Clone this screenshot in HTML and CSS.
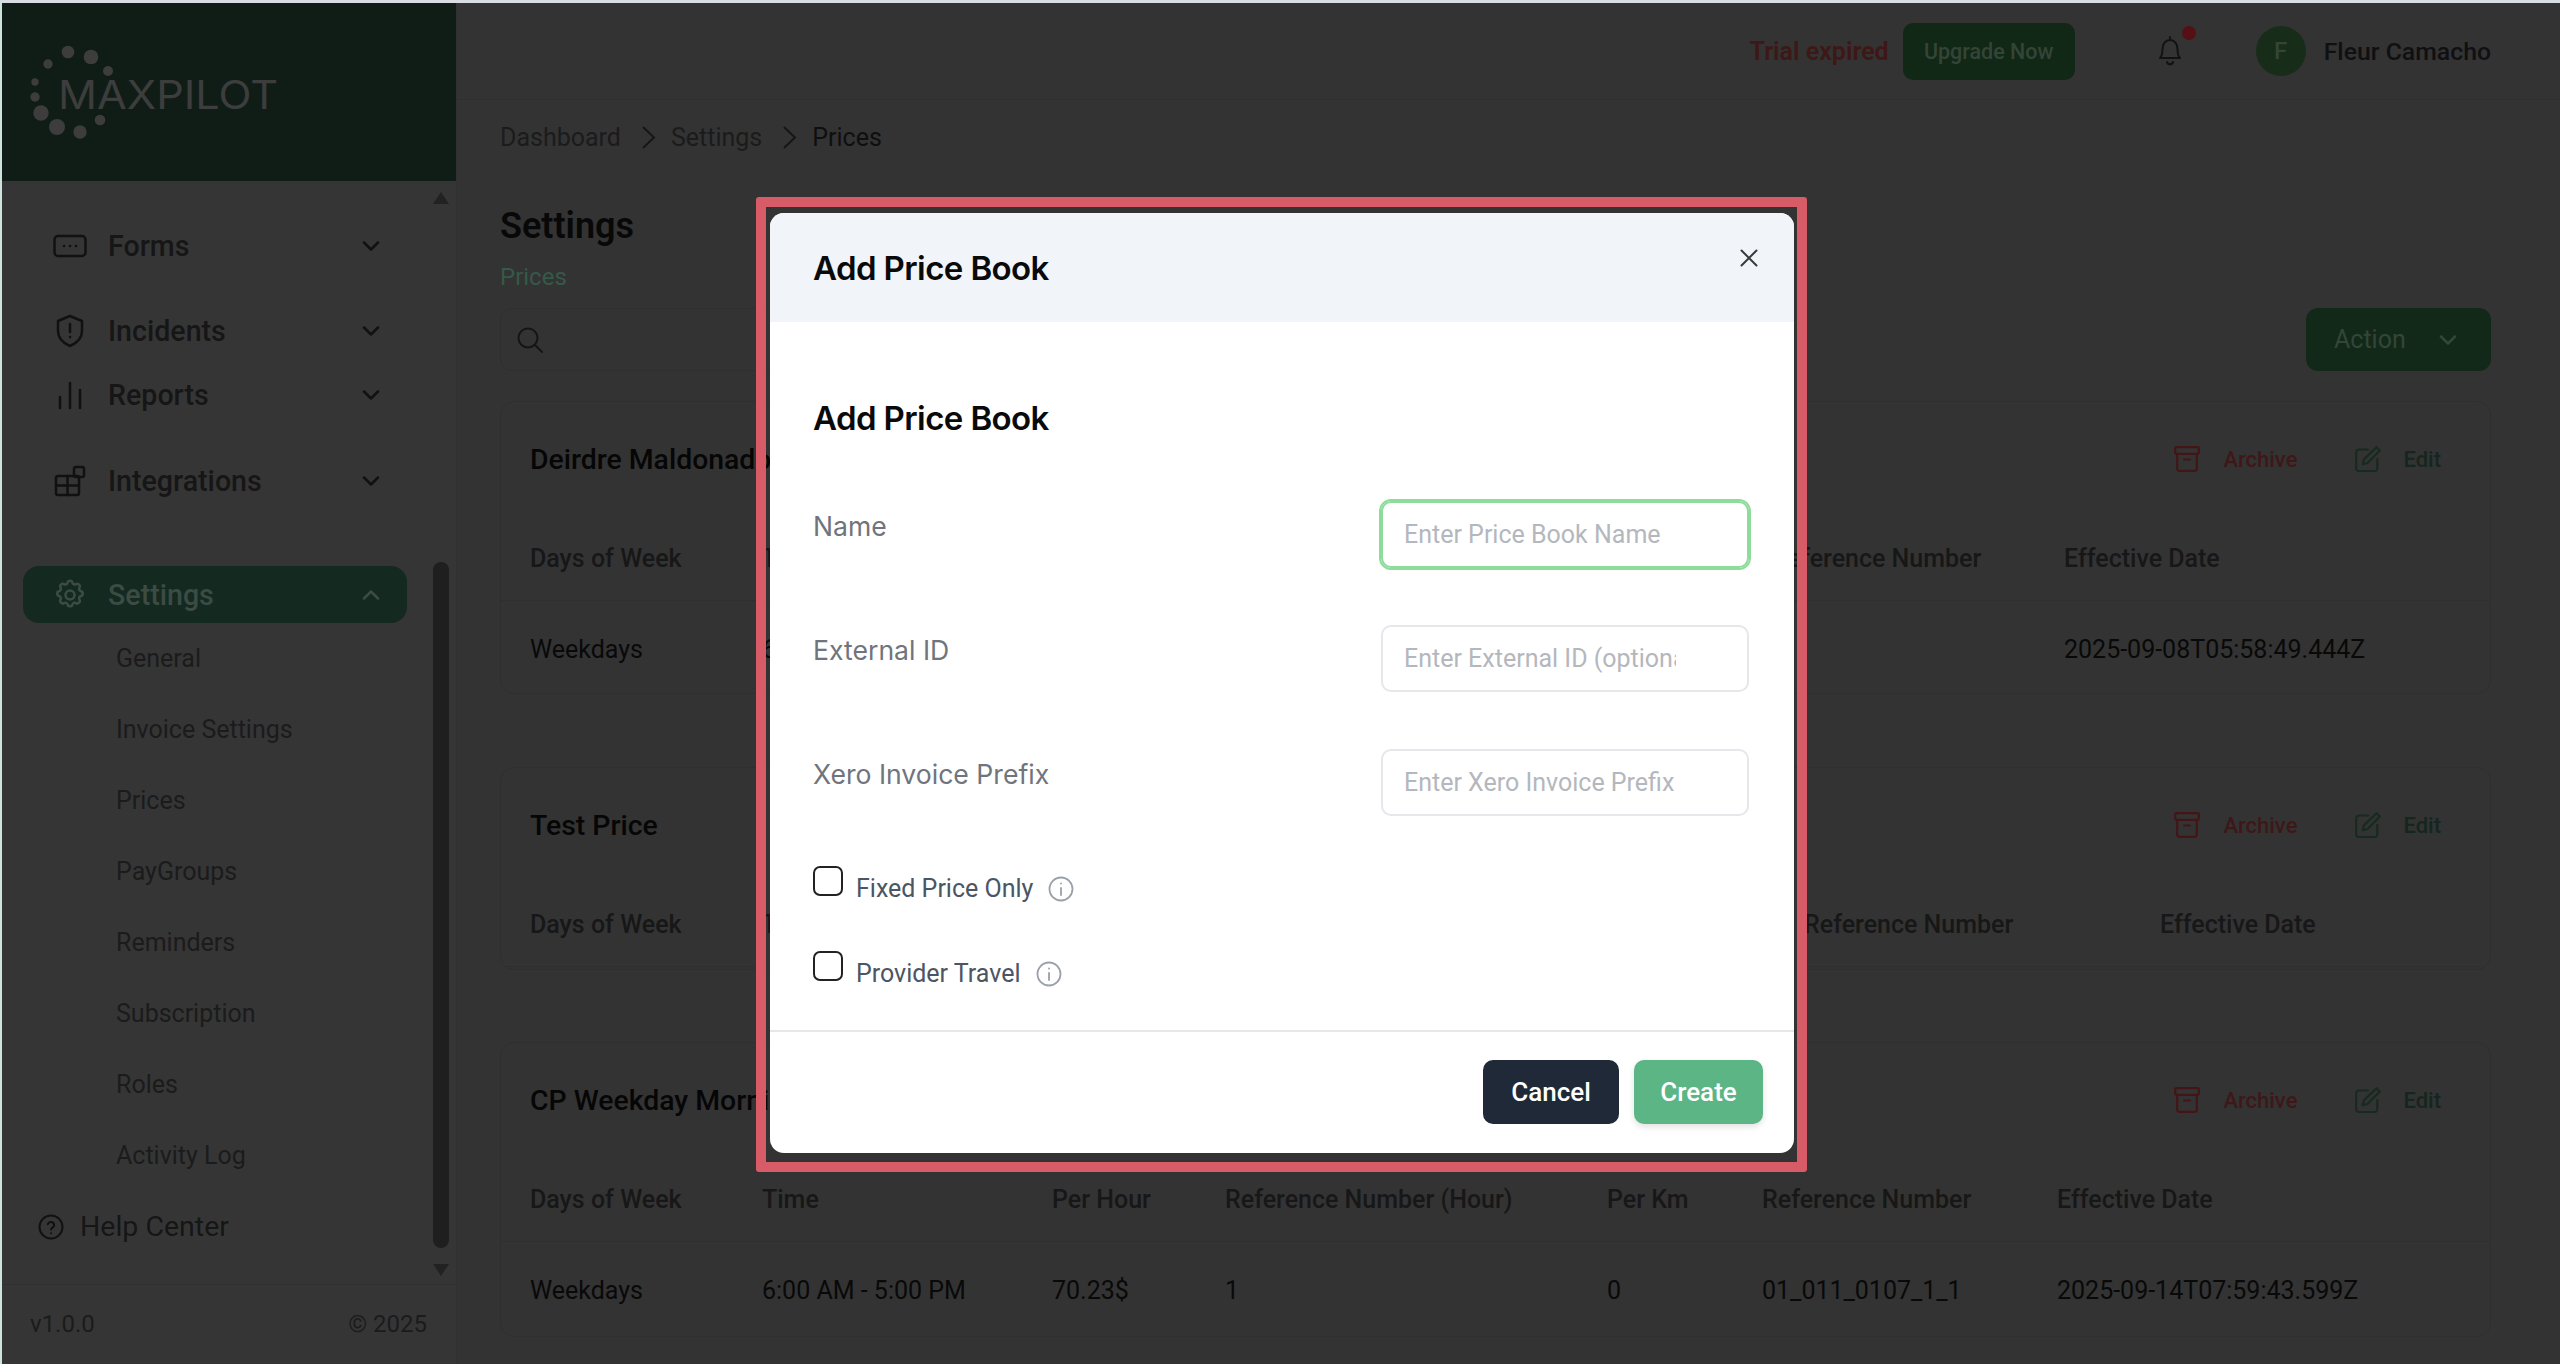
FILE: index.html
```html
<!DOCTYPE html>
<html lang="en">
<head>
    <meta charset="UTF-8">
    <title>Prices - Settings</title>
    <link rel="stylesheet" href="styles.css">
</head>
<body>
    <div class="app">
        <aside class="sidebar">
            <div class="logo-bar">
                <svg class="logo" width="300" height="178" viewBox="0 0 300 178">
                    <g fill="#3d3d3d">
                        <circle cx="66" cy="49" r="6.3"/><circle cx="89" cy="54" r="7.3"/><circle cx="106" cy="68" r="5"/>
                        <circle cx="46" cy="61" r="4.7"/><circle cx="33" cy="79" r="3.7"/><circle cx="33" cy="94" r="4.7"/>
                        <circle cx="39" cy="110" r="7.7"/><circle cx="55" cy="124" r="8"/><circle cx="78" cy="129" r="6.7"/>
                        <circle cx="98" cy="117" r="5.3"/>
                        <text class="logo-text" x="56" y="106" textLength="220" lengthAdjust="spacingAndGlyphs">MAXPILOT</text>
                    </g>
                </svg>
            </div>

            <nav class="menu">
                <a class="menu-item item-forms">
                    <svg class="menu-icon" viewBox="0 0 34 24"><rect x="1.500" y="2" width="31" height="20" rx="3.500"/><path d="M11 12h.1M17 12h.1M23 12h.1"/></svg>
                    <span>Forms</span>
                    <svg class="chev" viewBox="0 0 18 10"><path d="M2 1.500l7 7 7-7"/></svg>
                </a>
                <a class="menu-item item-incidents">
                    <svg class="menu-icon" viewBox="0 0 32 34"><path d="M16 2l12 5v10c0 8-5 12-12 15C9 29 4 25 4 17V7z"/><path d="M16 10v8M16 23h.1"/></svg>
                    <span>Incidents</span>
                    <svg class="chev" viewBox="0 0 18 10"><path d="M2 1.500l7 7 7-7"/></svg>
                </a>
                <a class="menu-item item-reports">
                    <svg class="menu-icon" viewBox="0 0 34 34"><path d="M7 30V19M17 30V5M27 30V12"/></svg>
                    <span>Reports</span>
                    <svg class="chev" viewBox="0 0 18 10"><path d="M2 1.500l7 7 7-7"/></svg>
                </a>
                <a class="menu-item item-integrations">
                    <svg class="menu-icon" viewBox="0 0 34 34"><rect x="3" y="12" width="23" height="19" rx="2"/><path d="M3 21.500h23M14.500 12v19"/><rect x="21" y="3" width="10" height="10" rx="2"/></svg>
                    <span>Integrations</span>
                    <svg class="chev" viewBox="0 0 18 10"><path d="M2 1.500l7 7 7-7"/></svg>
                </a>
                <a class="menu-item active">
                    <svg class="menu-icon" viewBox="0 0 24 24"><circle cx="12" cy="12" r="3.200"/><path d="M10.300 3.200c.4-1.600 3-1.600 3.400 0a1.700 1.700 0 0 0 2.600 1.100c1.400-.9 3.300 1 2.400 2.400a1.700 1.700 0 0 0 1.100 2.600c1.600.4 1.600 3 0 3.400a1.700 1.700 0 0 0-1.100 2.600c.9 1.400-1 3.300-2.400 2.400a1.700 1.700 0 0 0-2.600 1.100c-.4 1.600-3 1.600-3.400 0a1.700 1.700 0 0 0-2.600-1.100c-1.400.9-3.300-1-2.400-2.400a1.700 1.700 0 0 0-1.100-2.600c-1.600-.4-1.600-3 0-3.400a1.700 1.700 0 0 0 1.100-2.600c-.9-1.400 1-3.300 2.400-2.400a1.700 1.700 0 0 0 2.600-1.100z"/></svg>
                    <span>Settings</span>
                    <svg class="chev" viewBox="0 0 18 10"><path d="M2 8.500l7-7 7 7"/></svg>
                </a>
                <div class="submenu">
                    <a>General</a>
                    <a>Invoice Settings</a>
                    <a>Prices</a>
                    <a>PayGroups</a>
                    <a>Reminders</a>
                    <a>Subscription</a>
                    <a>Roles</a>
                    <a>Activity Log</a>
                </div>
                <a class="help">
                    <svg class="help-icon" viewBox="0 0 26 26"><circle cx="13" cy="13" r="11.500"/><path d="M9.800 10.200a3.300 3.300 0 0 1 6.400 1c0 2.200-3.200 2.600-3.200 4.400M13 19.200h.1"/></svg>
                    <span>Help Center</span>
                </a>
                <div class="scrollbar">
                    <div class="arrow-up"></div>
                    <div class="thumb"></div>
                    <div class="arrow-down"></div>
                </div>
            </nav>

            <div class="sidebar-foot">
                <span>v1.0.0</span>
                <span>© 2025</span>
            </div>
        </aside>

        <main class="main">
            <header class="topbar">
                <span class="trial">Trial expired</span>
                <button class="upgrade">Upgrade Now</button>
                <div class="bell">
                    <svg width="30" height="34" viewBox="0 0 30 34"><path d="M5 24c2-2 2.500-4 2.500-9 0-5 3-9 7.500-9s7.500 4 7.500 9c0 5 .5 7 2.500 9zM15 3v3M12 28c.5 3 5.500 3 6 0"/></svg>
                    <i class="bell-dot"></i>
                </div>
                <div class="avatar">F</div>
                <span class="user-name">Fleur Camacho</span>
            </header>

            <div class="content">
                <div class="crumbs">
                    <span>Dashboard</span>
                    <svg class="crumb-sep" viewBox="0 0 15 25"><path d="M2 2l11 10.500L2 23"/></svg>
                    <span>Settings</span>
                    <svg class="crumb-sep" viewBox="0 0 15 25"><path d="M2 2l11 10.500L2 23"/></svg>
                    <span class="crumb-now">Prices</span>
                </div>

                <h1>Settings</h1>
                <div class="subtitle">Prices</div>

                <div class="toolbar">
                    <div class="search">
                        <svg width="28" height="28" viewBox="0 0 28 28"><circle cx="12" cy="12" r="9.500"/><path d="M19 19l7 7"/></svg>
                    </div>
                    <button class="action">Action
                        <svg class="action-chev" viewBox="0 0 18 10"><path d="M2 1.500l7 7 7-7"/></svg>
                    </button>
                </div>

                <section class="card card-one">
                    <div class="card-head">
                        <h3>Deirdre Maldonado Weekday</h3>
                        <div class="card-actions">
                            <svg class="act-icon red" viewBox="0 0 26 26"><rect x="1.200" y="1.200" width="23.600" height="6.600" rx="1"/><path d="M3.200 7.800v15a2 2 0 0 0 2 2h15.600a2 2 0 0 0 2-2v-15M10 13.500h6"/></svg>
                            <span class="archive">Archive</span>
                            <svg class="act-icon green" viewBox="0 0 26 26"><path d="M13 3.500H4a2.800 2.800 0 0 0-2.800 2.800v16a2.800 2.800 0 0 0 2.800 2.800h15.500a2.800 2.800 0 0 0 2.800-2.800V13"/><path d="M21.500 1.200l3.300 3.300L12.500 17l-4.800 1.200 1.200-4.800z"/></svg>
                            <span class="edit">Edit</span>
                        </div>
                    </div>
                    <div class="row row-head cols-one">
                        <span>Days of Week</span><span>Time</span><span>Per Hour</span><span>Reference Number (Hour)</span><span>Per Km</span><span>Reference Number</span><span>Effective Date</span>
                    </div>
                    <div class="row row-body cols-one">
                        <span>Weekdays</span><span>6:00</span><span></span><span></span><span></span><span></span><span>2025-09-08T05:58:49.444Z</span>
                    </div>
                </section>

                <section class="card card-two">
                    <div class="card-head">
                        <h3>Test Price</h3>
                        <div class="card-actions">
                            <svg class="act-icon red" viewBox="0 0 26 26"><rect x="1.200" y="1.200" width="23.600" height="6.600" rx="1"/><path d="M3.200 7.800v15a2 2 0 0 0 2 2h15.600a2 2 0 0 0 2-2v-15M10 13.500h6"/></svg>
                            <span class="archive">Archive</span>
                            <svg class="act-icon green" viewBox="0 0 26 26"><path d="M13 3.500H4a2.800 2.800 0 0 0-2.800 2.800v16a2.800 2.800 0 0 0 2.800 2.800h15.500a2.800 2.800 0 0 0 2.800-2.800V13"/><path d="M21.500 1.200l3.300 3.300L12.500 17l-4.800 1.200 1.200-4.800z"/></svg>
                            <span class="edit">Edit</span>
                        </div>
                    </div>
                    <div class="row row-head cols-two">
                        <span>Days of Week</span><span>Time</span><span>Per Hour</span><span>Reference Number (Hour)</span><span>Per Km</span><span>Reference Number</span><span>Effective Date</span>
                    </div>
                </section>

                <section class="card card-three">
                    <div class="card-head">
                        <h3>CP Weekday Morning</h3>
                        <div class="card-actions">
                            <svg class="act-icon red" viewBox="0 0 26 26"><rect x="1.200" y="1.200" width="23.600" height="6.600" rx="1"/><path d="M3.200 7.800v15a2 2 0 0 0 2 2h15.600a2 2 0 0 0 2-2v-15M10 13.500h6"/></svg>
                            <span class="archive">Archive</span>
                            <svg class="act-icon green" viewBox="0 0 26 26"><path d="M13 3.500H4a2.800 2.800 0 0 0-2.800 2.800v16a2.800 2.800 0 0 0 2.800 2.800h15.500a2.800 2.800 0 0 0 2.800-2.800V13"/><path d="M21.500 1.200l3.300 3.300L12.500 17l-4.800 1.200 1.200-4.800z"/></svg>
                            <span class="edit">Edit</span>
                        </div>
                    </div>
                    <div class="row row-head cols-three">
                        <span>Days of Week</span><span>Time</span><span>Per Hour</span><span>Reference Number (Hour)</span><span>Per Km</span><span>Reference Number</span><span>Effective Date</span>
                    </div>
                    <div class="row row-body cols-three">
                        <span>Weekdays</span><span>6:00 AM - 5:00 PM</span><span>70.23$</span><span>1</span><span>0</span><span>01_011_0107_1_1</span><span>2025-09-14T07:59:43.599Z</span>
                    </div>
                </section>
            </div>
        </main>
    </div>

    <!-- red frame marks the dialog -->
    <div class="frame">
        <div class="modal">
            <div class="modal-head">
                <h2>Add Price Book</h2>
                <svg class="modal-close" viewBox="0 0 18 18"><path d="M1.500 1.500l15 15M16.500 1.500l-15 15"/></svg>
            </div>
            <div class="modal-body">
                <h2>Add Price Book</h2>
                <div class="field first">
                    <label for="pbName">Name</label>
                    <input id="pbName" class="focused" type="text" placeholder="Enter Price Book Name">
                </div>
                <div class="field">
                    <label for="pbExternal">External ID</label>
                    <input id="pbExternal" type="text" placeholder="Enter External ID (optional)">
                </div>
                <div class="field">
                    <label for="pbPrefix">Xero Invoice Prefix</label>
                    <input id="pbPrefix" type="text" placeholder="Enter Xero Invoice Prefix">
                </div>
                <div class="check check-fixed">
                    <span class="box"></span>
                    <span class="check-label">Fixed Price Only</span>
                    <svg class="info" viewBox="0 0 26 26"><circle cx="13" cy="13" r="11.500"/><path d="M13 12v7M13 7.500h.1"/></svg>
                </div>
                <div class="check check-travel">
                    <span class="box"></span>
                    <span class="check-label">Provider Travel</span>
                    <svg class="info" viewBox="0 0 26 26"><circle cx="13" cy="13" r="11.500"/><path d="M13 12v7M13 7.500h.1"/></svg>
                </div>
            </div>
            <div class="modal-foot">
                <button class="btn-cancel">Cancel</button>
                <button class="btn-create">Create</button>
            </div>
        </div>
    </div>
</body>
</html>
```

FILE: styles.css
```css
* { box-sizing: border-box; }
html, body { margin: 0; height: 100%; overflow: hidden; }
body { font-family: Roboto, "Liberation Sans", sans-serif; background: #333; color: #111; font-size: 25px; }
h1, h2, h3 { margin: 0; }
button { font-family: inherit; border: 0; }

.app { display: flex; height: 1364px; border-top: 3px solid #d9dde3; border-left: 2px solid #cfe3de; }

/* sidebar */
.sidebar { width: 455px; flex: none; display: flex; flex-direction: column; background: #353535; border-right: 1px solid #303030; }
.logo-bar { height: 178px; flex: none; background: #101d17; }
.logo { display: block; }
.logo-text { font-family: Inter, sans-serif; font-size: 39px; font-weight: 400; }
.menu { position: relative; flex: 1; padding-top: 36px; }
.menu-item { display: flex; align-items: center; height: 57px; margin: 0 49px 0 21px; padding-left: 30px; font-size: 28.600px; font-weight: 500; color: #161617; }
.menu-item span { flex: 1; margin-left: 21px; }
.menu-icon { width: 34px; height: 34px; flex: none; fill: none; stroke: #111; stroke-width: 2.500; stroke-linecap: round; stroke-linejoin: round; }
.chev { width: 18px; height: 10px; margin-right: 27px; fill: none; stroke: #111; stroke-width: 2.500; stroke-linecap: round; stroke-linejoin: round; }
.item-incidents { margin-top: 28px; }
.item-reports { margin-top: 7px; }
.item-integrations { margin-top: 29px; }
.menu-item.active { margin-top: 57px; border-radius: 16px; background: #14291f; color: #3c4b44; }
.menu-item.active .menu-icon, .menu-item.active .chev { stroke: #3c4b44; stroke-width: 1.800; }
.menu-item.active .chev { stroke-width: 2.500; }
.submenu { display: flex; flex-direction: column; padding-left: 114px; }
.submenu a { height: 71px; display: flex; align-items: center; font-size: 25px; color: #1b1b1c; }
.help { display: flex; align-items: center; height: 71px; padding-left: 36px; font-size: 28.500px; color: #161617; }
.help span { margin-left: 16px; }
.help-icon { width: 26px; height: 26px; fill: none; stroke: #111; stroke-width: 2; stroke-linecap: round; }
.scrollbar { position: absolute; right: 7px; top: 11px; width: 16px; bottom: 8px; display: flex; flex-direction: column; align-items: center; justify-content: space-between; }
.arrow-up { border: 8px solid transparent; border-top: 0; border-bottom: 12px solid #222; }
.arrow-down { border: 8px solid transparent; border-bottom: 0; border-top: 12px solid #222; }
.thumb { width: 16px; height: 686px; margin-top: 342px; border-radius: 8px; background: #1f1f1f; }
.sidebar-foot { height: 78px; flex: none; display: flex; align-items: center; justify-content: space-between; padding: 0 29px 0 28px; margin-bottom: 2px; border-top: 1px solid #2f2f2f; font-size: 24px; color: #1b1b1c; }

/* main */
.main { flex: 1; min-width: 0; }
.topbar { height: 97px; display: flex; align-items: center; padding-right: 69px; border-bottom: 1px solid #2f2f2f; }
.trial { margin-left: auto; font-weight: 600; font-size: 25px; color: #3e1717; }
.upgrade { width: 172px; height: 57px; margin-left: 14px; border-radius: 10px; background: #122816; color: #344538; font-size: 21.500px; font-weight: 500; }
.bell { position: relative; width: 30px; height: 34px; margin-left: 80px; }
.bell svg { display: block; fill: none; stroke: #121212; stroke-width: 2; stroke-linecap: round; stroke-linejoin: round; }
.bell-dot { position: absolute; top: -8px; left: 27px; width: 14px; height: 14px; border-radius: 50%; background: #541014; }
.avatar { width: 50px; height: 50px; margin-left: 71px; border-radius: 50%; background: #182d19; color: #344538; display: flex; align-items: center; justify-content: center; font-size: 24px; font-weight: 500; }
.user-name { margin-left: 18px; font-size: 24.800px; font-weight: 500; color: #101012; }

.content { padding: 0 69px 0 43px; }
.crumbs { display: flex; align-items: center; height: 74px; font-size: 25px; color: #1b1b1c; }
.crumb-sep { width: 15px; height: 25px; margin: 0 15px 0 20px; fill: none; stroke: #161616; stroke-width: 2; }
.crumb-now { color: #0f0f0f; }
h1 { margin-top: 32px; font-size: 36px; font-weight: 600; line-height: 41px; color: #080808; }
.subtitle { margin-top: 15px; font-size: 24px; line-height: 30px; color: #35594a; }
.toolbar { display: flex; justify-content: space-between; margin-top: 16px; }
.search { width: 1000px; height: 63px; padding: 17px 0 0 15px; border: 1px solid #2f2f2f; border-radius: 12px; }
.search svg { display: block; fill: none; stroke: #151515; stroke-width: 2; stroke-linecap: round; }
.action { display: flex; align-items: center; width: 185px; height: 63px; padding-left: 28px; border-radius: 12px; background: #122919; color: #344539; font-size: 25px; }
.action-chev { width: 18px; height: 10px; margin-left: 33px; fill: none; stroke: #344539; stroke-width: 2.500; stroke-linecap: round; stroke-linejoin: round; }

.card { border: 1px solid #2f2f2f; border-radius: 14px; overflow: hidden; }
.card-one { height: 293px; margin-top: 30px; }
.card-two { height: 203px; margin-top: 73px; }
.card-three { height: 295px; margin-top: 72px; }
.card-head { height: 114px; display: flex; align-items: center; justify-content: space-between; padding-left: 29px; padding-right: 49px; }
.card-head h3 { font-size: 28.400px; font-weight: 500; color: #060606; }
.card-actions { display: flex; align-items: center; font-size: 22px; font-weight: 500; }
.act-icon { width: 26px; height: 26px; fill: none; stroke-width: 2.200; stroke-linejoin: round; stroke-linecap: round; }
.act-icon.red { stroke: #431517; }
.act-icon.green { stroke: #162a21; }
.archive { margin-left: 23px; color: #3f1719; }
.edit { margin-left: 22px; color: #15261e; }
.card-actions .act-icon.green { margin-left: 58px; }
.row { display: grid; align-items: center; padding-left: 29px; font-size: 25px; }
.row-head { height: 85px; color: #171718; font-weight: 500; border-bottom: 1px solid #2f2f2f; }
.row-body { height: 96px; color: #090909; }
.row span { white-space: nowrap; }
.cols-one { grid-template-columns: 232px 290px 173px 375px 172px 292px 1fr; }
.cols-two { grid-template-columns: 232px 290px 173px 375px 204px 356px 1fr; }
.cols-three { grid-template-columns: 232px 290px 173px 382px 155px 295px 1fr; }

/* dialog */
.frame { position: absolute; left: 756px; top: 197px; width: 1051px; height: 975px; padding: 6px 3px 9px 4px; border: 10px solid #d75c68; border-radius: 3px; }
.modal { display: flex; flex-direction: column; height: 100%; border-radius: 14px; overflow: hidden; background: #fff; font-family: Inter, Roboto, sans-serif; }
.modal h2 { font-size: 33px; font-weight: 600; letter-spacing: -0.6px; color: #0a0a0a; }
.modal-head { position: relative; height: 109px; flex: none; display: flex; align-items: center; padding: 1px 0 0 43px; background: #f1f5fa; }
.modal-close { position: absolute; right: 36px; top: 36px; width: 18px; height: 18px; fill: none; stroke: #3a3a3a; stroke-width: 2; stroke-linecap: round; }
.modal-body { flex: 1; padding: 76px 43px 0; }
.modal-body h2 { line-height: 40px; }
.field { display: flex; justify-content: space-between; align-items: flex-start; height: 67px; margin-top: 57px; padding-right: 2px; }
.field.first { margin-top: 63px; }
.field label { font-size: 26.600px; line-height: 32px; margin-top: 9px; color: #70747d; }
.field input { width: 368px; height: 67px; padding: 0 71px 0 21px; border: 2px solid #e5e7eb; border-radius: 10px; outline: 0; background: #fff; font-family: Roboto, sans-serif; font-size: 25px; }
.field input.focused { outline: 2px solid #8edc9c; outline-offset: 0; border-color: #8edc9c; }
.field input::placeholder { color: #b4b7bd; opacity: 1; }
.check { display: flex; align-items: flex-start; }
.check-fixed { margin-top: 50px; }
.check-travel { margin-top: 47px; }
.box { width: 30px; height: 30px; flex: none; border: 2px solid #222; border-radius: 7px; background: #fff; }
.check-label { margin: 8px 0 0 13px; font-family: Roboto, sans-serif; font-size: 25px; line-height: 30px; color: #4b5563; }
.info { width: 26px; height: 26px; margin: 10px 0 0 15px; fill: none; stroke: #9aa0ab; stroke-width: 1.800; stroke-linecap: round; }
.modal-foot { height: 123px; flex: none; display: flex; justify-content: flex-end; align-items: flex-start; gap: 15px; padding: 28px 31px 0 0; border-top: 2px solid #e5e7eb; }
.modal-foot button { height: 64px; border-radius: 10px; color: #fff; font-family: Roboto, sans-serif; font-size: 26px; font-weight: 500; }
.btn-cancel { width: 136px; background: #1f2937; }
.btn-create { width: 129px; background: #5cb585; box-shadow: 0 3px 6px rgba(0,0,0,.12); }
```
